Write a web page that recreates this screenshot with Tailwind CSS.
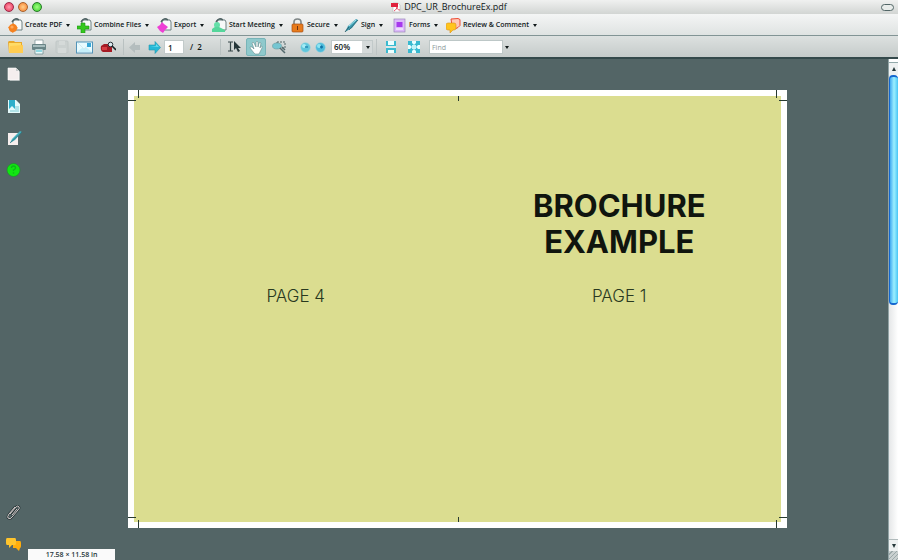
<!DOCTYPE html>
<html lang="en">
<head>
<meta charset="utf-8">
<meta name="viewport" content="width=device-width, initial-scale=1">
<title>DPC_UR_BrochureEx.pdf</title>
<script src="https://cdn.jsdelivr.net/npm/@tailwindcss/browser@4"></script>
</head>
<body class="flex h-screen flex-col overflow-hidden bg-[#536566] font-['Open_Sans','Noto_Sans',sans-serif] text-[#101819]">

<header class="shrink-0">
  <div class="flex h-[14px] items-center bg-linear-to-b from-[#f0f1f0] to-[#d2d5d3] px-1">
    <div class="flex flex-1 gap-1">
      <button aria-label="Close" class="size-[10px] rounded-full border border-[#9c2848] bg-radial from-[#ff9ab0] to-[#e51650]"></button>
      <button aria-label="Minimize" class="size-[10px] rounded-full border border-[#a8622e] bg-radial from-[#ffd08a] to-[#f5791c]"></button>
      <button aria-label="Zoom window" class="size-[10px] rounded-full border border-[#267a26] bg-radial from-[#a0ff80] to-[#20cc20]"></button>
    </div>
    <div class="flex items-center gap-[3px]">
      <svg class="h-[11px] w-[10px]" viewBox="0 0 10 11"><path d="M2 1h5l2 2v7H2z" fill="#fff" stroke="#aaa" stroke-width=".5"/><path d="M0 1h7v4H0z" fill="#e0203c"/><path d="M3 9c2-1 3-3 3-4 0 2 1 3 3 3" fill="none" stroke="#e0203c" stroke-width=".8"/></svg>
      <h1 class="text-[9px] leading-[14px] font-normal">DPC_UR_BrochureEx.pdf</h1>
    </div>
    <div class="flex flex-1 justify-end">
      <button aria-label="Toggle toolbar" class="h-[7px] w-[13px] rounded-full border border-[#526667] bg-[#e8ecea]"></button>
    </div>
  </div>

  <nav aria-label="Tasks" class="flex h-[22px] items-center border-b border-[#829495] bg-linear-to-b from-[#f4f5f5] to-[#dfe3e2] pt-[2px] pl-2 text-[7px] font-semibold whitespace-nowrap">
    <button class="flex w-[69px] items-center gap-[2px]">
      <svg class="size-[15px]" viewBox="0 0 15 15"><path d="M5 2h8l1 2v8H5z" fill="#f7f9f8" stroke="#6f8182"/><path d="M4 4q3-5 7-2" fill="none" stroke="#506364" stroke-width="1.500"/><path d="M5 5l3 3 2 2-3 2-2 3-3-2-2-4 3-1z" fill="#f58220"/><circle cx="5" cy="10" r="4" fill="#f58220"/><circle cx="4" cy="9" r="1.600" fill="#ffab5c"/></svg>
      <span>Create PDF</span><span class="ml-[2px] border-x-2 border-t-3 border-x-transparent border-t-[#101819]"></span>
    </button>
    <button class="flex w-[80px] items-center gap-[2px]">
      <svg class="size-[15px]" viewBox="0 0 15 15"><path d="M5 2h8l1 2v8H5z" fill="#f7f9f8" stroke="#6f8182"/><path d="M4 4q3-5 7-2" fill="none" stroke="#506364" stroke-width="1.500"/><path d="M4 5h4v3h4v3H8v4H4v-4H0V8h4z" fill="#35c81e" stroke="#1d9416" stroke-width=".6"/></svg>
      <span>Combine Files</span><span class="ml-[2px] border-x-2 border-t-3 border-x-transparent border-t-[#101819]"></span>
    </button>
    <button class="flex w-[55px] items-center gap-[2px]">
      <svg class="size-[15px]" viewBox="0 0 15 15"><path d="M5 2h8l1 2v8H5z" fill="#f7f9f8" stroke="#6f8182"/><path d="M4 4q3-5 7-2" fill="none" stroke="#506364" stroke-width="1.500"/><path d="M5 4l2 2 4 3-3 3-2 3-3-2-3-4 3-2z" fill="#ee3fd5"/></svg>
      <span>Export</span><span class="ml-[2px] border-x-2 border-t-3 border-x-transparent border-t-[#101819]"></span>
    </button>
    <button class="flex w-[78px] items-center gap-[2px]">
      <svg class="size-[15px]" viewBox="0 0 15 15"><path d="M5 2h8l1 2v8H5z" fill="#f7f9f8" stroke="#6f8182"/><path d="M4 4q3-5 7-2" fill="none" stroke="#506364" stroke-width="1.500"/><circle cx="5" cy="7" r="3" fill="#63dfa8"/><path d="M0 14v-3q3-3 7-2l6 3v2z" fill="#55d69b"/></svg>
      <span>Start Meeting</span><span class="ml-[2px] border-x-2 border-t-3 border-x-transparent border-t-[#101819]"></span>
    </button>
    <button class="flex w-[54px] items-center gap-[2px]">
      <svg class="size-[15px]" viewBox="0 0 15 15"><path d="M4 8V4q0-3 3.500-3T11 4v4" fill="none" stroke="#7e8586" stroke-width="1.600"/><rect x="2" y="6" width="11" height="8" rx="1" fill="#e87b1c" stroke="#a44e14" stroke-width=".7"/><path d="M7 8h1v4H7z" fill="#6e3312"/></svg>
      <span>Secure</span><span class="ml-[2px] border-x-2 border-t-3 border-x-transparent border-t-[#101819]"></span>
    </button>
    <button class="flex w-[48px] items-center gap-[2px]">
      <svg class="size-[15px]" viewBox="0 0 15 15"><path d="M1 14l3-6 8-7 2 1-6 8z" fill="#3e9db2"/><path d="M1 14l4-5" stroke="#244e59" stroke-width=".8"/><path d="M5 8l7-6" stroke="#a5e4ed"/><path d="M5 12l9-10" stroke="#28616d" stroke-width=".8"/></svg>
      <span>Sign</span><span class="ml-[2px] border-x-2 border-t-3 border-x-transparent border-t-[#101819]"></span>
    </button>
    <button class="flex w-[54px] items-center gap-[2px]">
      <svg class="size-[15px]" viewBox="0 0 15 15"><rect x="2" y="1" width="11" height="13" fill="#dcb8fa" stroke="#9a86b8" stroke-width=".7"/><rect x="4.500" y="4" width="6" height="5" fill="#a638ed"/><path d="M4 11h7" stroke="#fff"/></svg>
      <span>Forms</span><span class="ml-[2px] border-x-2 border-t-3 border-x-transparent border-t-[#101819]"></span>
    </button>
    <button class="flex items-center gap-[2px]">
      <svg class="size-[15px]" viewBox="0 0 15 15"><path d="M5 1l7-.5 2 1v6l-2 2-2 1-4-3z" fill="#ffc8b4" stroke="#ed4b35"/><path d="M2 5h6q2 0 2 2v3q0 2-2 2H7l-3 3v-3H2q-2 0-2-2V7q0-2 2-2z" fill="#ffc51d" stroke="#dc9015" stroke-width=".6"/></svg>
      <span>Review &amp; Comment</span><span class="ml-[2px] border-x-2 border-t-3 border-x-transparent border-t-[#101819]"></span>
    </button>
  </nav>

  <div role="toolbar" aria-label="File and view" class="flex h-[23px] items-center border-b-2 border-[#34494b] bg-linear-to-b from-[#dde1e0] to-[#c5cbca] pt-px pl-1 text-[8px] font-semibold">
    <button aria-label="Open" class="flex w-[23px] justify-center"><svg class="size-4" viewBox="0 0 16 16"><path d="M0 3l1-1h5l1 1h7v4l1 7H1z" fill="#e8a82b"/><path d="M1 4h12v9H1z" fill="#ffdc67"/><path d="M1 14l1-7 13-1v8z" fill="#ffcd52"/></svg></button>
    <button aria-label="Print" class="flex w-[23px] justify-center"><svg class="size-4" viewBox="0 0 16 16"><path d="M4 1h8v6H4z" fill="#fff" stroke="#789092" stroke-width=".7"/><rect x="1" y="5" width="14" height="6" rx="1" fill="#6a8587"/><path d="M2 6h12v2H2z" fill="#a7bdbe"/><path d="M4 10h8v5H4z" fill="#e8fafa" stroke="#678789" stroke-width=".7"/><path d="M5 12h6" stroke="#35b5c8"/></svg></button>
    <button aria-label="Save" disabled class="flex w-[23px] justify-center"><svg class="size-4" viewBox="0 0 16 16"><rect x="2" y="2" width="12" height="12" rx="1" fill="#cbd1d0" stroke="#c0c7c6"/><path d="M5 2h6v4H5zM4 9h8v5H4z" fill="#d5dad9"/></svg></button>
    <button aria-label="Email" class="flex w-[23px] justify-center"><svg class="size-[17px]" viewBox="0 0 17 17"><rect x=".5" y="3" width="16" height="11" fill="#e9fbff" stroke="#5293b8"/><path d="M1 13l5-4h5l5 4" fill="#c5effa"/><path d="M2 4l6 6 7-6" fill="none" stroke="#d3eaf0"/><path d="M11 4h4v4h-4z" fill="#37a6d6"/></svg></button>
    <button aria-label="Search" class="flex w-[23px] justify-center"><svg class="size-4" viewBox="0 0 16 16"><path d="M1 7l3-2h6l2 3v5H3q-3-1-2-6z" fill="#a51b24"/><path d="M2 8h5v3H2z" fill="#d83c43"/><circle cx="10.500" cy="5.500" r="2.300" fill="#dceaf0" stroke="#273137"/><path d="M12 7l4 4" stroke="#172125" stroke-width="1.600"/></svg></button>
    <span class="ml-1 h-4 w-px bg-[#b9c1c1]"></span>
    <button aria-label="Previous page" disabled class="flex w-5 justify-center"><svg class="size-[13px]" viewBox="0 0 13 13"><path d="M1 6.500L7 1v3h5v5H7v3z" fill="#b4bdbe"/></svg></button>
    <button aria-label="Next page" class="flex w-5 justify-center"><svg class="size-[13px]" viewBox="0 0 13 13"><path d="M12.500 6.500L7 .5V4H1v5h6v3.500z" fill="#24b8d6" stroke="#2198ae" stroke-width=".6"/><path d="M2 5h6V3l3 3z" fill="#6fe0ef"/></svg></button>
    <input aria-label="Page number" value="1" class="h-[14px] w-5 border border-[#c2caca] bg-white pl-[3px]">
    <span class="ml-[6px] w-[30px] whitespace-pre">/  2</span>
    <span class="h-4 w-px bg-[#b9c1c1]"></span>
    <button aria-label="Select text" class="ml-[3px] flex w-5 justify-center"><svg class="h-[14px] w-[13px]" viewBox="0 0 13 14"><path d="M0 2h5M2.500 2v9M0 11h5" stroke="#38484a" stroke-width="1.200"/><path d="M6 1v9l2-2 2 4 2-1-2-3h3z" fill="#26373a"/></svg></button>
    <button aria-label="Hand tool" aria-pressed="true" class="ml-[2px] flex h-[18px] w-5 items-center justify-center rounded-xs border border-[#78b4b8] bg-[#8fc9cc]"><svg class="size-[15px]" viewBox="0 0 15 15"><path d="M5 13L1 8q0-2 2-1l2 2-2-6q1-2 2 0l2 4V2q1-2 2 0v5l1-4q1-1 2 0l-1 5 1-2q2 0 1 2l-2 4-1 2H6z" fill="#fff" stroke="#63898c" stroke-width=".6"/></svg></button>
    <button aria-label="Marquee zoom" class="ml-[3px] flex w-5 justify-center"><svg class="size-[15px]" viewBox="0 0 15 15"><path d="M5 2h8v6H5z" fill="none" stroke="#526668" stroke-dasharray="2 1"/><ellipse cx="5" cy="6" rx="4.500" ry="3" fill="#75c6d2" stroke="#659a9f" stroke-width=".6"/><path d="M8 8l5 5M10 7l3 3" stroke="#53696d" stroke-width="1.500"/></svg></button>
    <button aria-label="Zoom out" class="ml-2 flex w-[16px] justify-center"><svg class="size-[11px]" viewBox="0 0 11 11"><circle cx="5.500" cy="5.500" r="4.800" fill="#5fc6dc" stroke="#9fd6df" stroke-width=".6"/><circle cx="4" cy="4" r="2" fill="#a4edf4"/><path d="M5 5h3" stroke="#2488b4" stroke-width="1.500"/></svg></button>
    <button aria-label="Zoom in" class="flex w-[15px] justify-center"><svg class="size-[11px]" viewBox="0 0 11 11"><circle cx="5.500" cy="5.500" r="4.800" fill="#4dbbdb" stroke="#9fd6df" stroke-width=".6"/><circle cx="4" cy="4" r="2" fill="#8ee5f2"/><path d="M5 5h3M6.500 3.500v3" stroke="#1273a6" stroke-width="1.400"/></svg></button>
    <div class="relative ml-[3px] flex items-center">
      <select aria-label="Zoom level" class="h-[14px] w-[42px] appearance-none border border-[#c2caca] bg-linear-to-r from-white from-75% to-[#d5dada] to-75% pl-[2px]"><option>60%</option><option>100%</option></select>
      <span class="pointer-events-none absolute right-[3px] border-x-2 border-t-3 border-x-transparent border-t-[#101819]"></span>
    </div>
    <span class="ml-[3px] h-4 w-px bg-[#bdc4c4]"></span>
    <button aria-label="Fit width" class="ml-[2px] flex w-[23px] justify-center"><svg class="size-[14px]" viewBox="0 0 14 14"><path d="M2 1h10v5H2zM2 8h10v5H2z" fill="#3bbad0"/><path d="M4 1h6v4H4zM4 10h6v3H4z" fill="#edffff"/><path d="M2 7h10" stroke="#e8ffff"/></svg></button>
    <button aria-label="Fit page" class="flex w-[23px] justify-center"><svg class="size-[14px]" viewBox="0 0 14 14"><path d="M1 1h12v12H1z" fill="#38b9d0"/><path d="M5 1h4v2L7 5 5 3zM5 13h4v-2L7 9l-2 2zM1 5v4h2l2-2-2-2zM13 5v4h-2L9 7l2-2z" fill="#e8ffff"/><path d="M5 5h4v4H5z" fill="#c3f3f8"/></svg></button>
    <input aria-label="Find" placeholder="Find" class="ml-[4px] h-[14px] w-[74px] border border-[#bdc7c7] bg-white pl-[2px] text-[7px] font-normal placeholder:text-[#8d9b9c]">
    <button aria-label="Find options" class="ml-[2px] border-x-2 border-t-3 border-x-transparent border-t-[#101819]"></button>
  </div>
</header>

<main class="flex min-h-0 flex-1">
  <aside class="flex w-7 shrink-0 flex-col items-center justify-between pt-[7px] pb-2">
    <div class="flex flex-col gap-4">
      <button aria-label="Pages"><svg class="size-4" viewBox="0 0 16 16"><path d="M4 3h7l3 3v9H4z" fill="#98a2a2"/><path d="M2 2h8l3 3v9H2z" fill="#f4eeee" stroke="#fff" stroke-width=".6"/><path d="M10 2v3h3" fill="#c5caca"/></svg></button>
      <button aria-label="Bookmarks"><svg class="size-4" viewBox="0 0 16 16"><path d="M2 2h8l4 4v9H2z" fill="#e5fafb"/><path d="M3 2h6v9L6 8l-3 3z" fill="#2fafca"/><path d="M9 9h4M9 11h4M4 13h9" stroke="#7dcbd5"/></svg></button>
      <button aria-label="Signatures"><svg class="size-4" viewBox="0 0 16 16"><path d="M2 3h10v12H2z" fill="#f7efee"/><path d="M4 13l2-4 8-8 2 1-7 8z" fill="#45b0bd"/><path d="M4 13l12-11" stroke="#235f6b" stroke-width=".6"/></svg></button>
      <button aria-label="How to"><svg class="size-4" viewBox="0 0 16 16"><circle cx="7.500" cy="8" r="6.500" fill="#12e512" stroke="#168f26" stroke-width=".6"/><path d="M5.500 6q0-2 2-2t2 2q0 1-2 2v1" fill="none" stroke="#0cb919" stroke-width="1.300"/><circle cx="7.500" cy="11" r=".8" fill="#0cb919"/></svg></button>
    </div>
    <div class="flex flex-col gap-4">
      <button aria-label="Attachments"><svg class="size-4" viewBox="0 0 16 16"><path d="M4 10l6-7q2-2 3 0 1 1-1 3l-6 7q-2 3-4 1-1-1 1-4l6-7M6 11l5-6" fill="none" stroke="#273436" stroke-width="2.200"/><path d="M4 10l6-7q2-2 3 0 1 1-1 3l-6 7q-2 3-4 1-1-1 1-4l6-7M6 11l5-6" fill="none" stroke="#d6cfce"/></svg></button>
      <button aria-label="Comments"><svg class="size-4" viewBox="0 0 16 16"><path d="M7 5h7q1 0 1 2v3q0 2-1 2l-1 3-3-3H7z" fill="#ffad0c"/><path d="M1 2h8q1 0 1 2v3q0 2-1 2H6l-3 3V9H1Q0 9 0 7V4q0-2 1-2z" fill="#ffc42c"/></svg></button>
    </div>
  </aside>

  <div class="flex min-w-0 flex-1 flex-col justify-between">
    <article class="relative mt-[31px] mr-[101px] ml-[100px] flex h-[438px] flex-col bg-white p-[6px]">
      <div class="grid flex-1 grid-cols-2 bg-[#dbdd90] text-center font-['Inter',sans-serif]">
        <section class="flex flex-col items-center pt-[188px]">
          <p class="text-[17px] leading-6 font-light text-[#29391f]">PAGE 4</p>
        </section>
        <section class="flex flex-col items-center pt-[92px]">
          <h2 class="text-[31px] leading-9 font-bold text-[#10150e]">BROCHURE<br>EXAMPLE</h2>
          <p class="mt-6 text-[17px] leading-6 font-light text-[#29391f]">PAGE 1</p>
        </section>
      </div>
      <!-- Crop and fold marks -->
      <i class="absolute top-0 left-[10px] h-2 w-px bg-[#283a30]"></i>
      <i class="absolute top-[10px] left-0 h-px w-2 bg-[#283a30]"></i>
      <i class="absolute top-0 right-[10px] h-2 w-px bg-[#283a30]"></i>
      <i class="absolute top-[10px] right-0 h-px w-2 bg-[#283a30]"></i>
      <i class="absolute bottom-0 left-[10px] h-2 w-px bg-[#283a30]"></i>
      <i class="absolute bottom-[10px] left-0 h-px w-2 bg-[#283a30]"></i>
      <i class="absolute right-[10px] bottom-0 h-2 w-px bg-[#283a30]"></i>
      <i class="absolute right-0 bottom-[10px] h-px w-2 bg-[#283a30]"></i>
      <i class="absolute top-[6px] left-1/2 h-[5px] w-px bg-[#283a30]"></i>
      <i class="absolute bottom-[6px] left-1/2 h-[5px] w-px bg-[#283a30]"></i>
    </article>
    <p class="h-[11px] w-[87px] bg-[#fafafa] text-center text-[7px] leading-[11px] font-semibold text-[#26363a]">17.58 × 11.58 in</p>
  </div>

  <div aria-label="Vertical scroll bar" class="flex w-[10px] shrink-0 flex-col border-l border-[#91a3a5] bg-linear-to-r from-[#e5e7e8] to-white">
    <div class="h-1 border-b border-[#92a9aa] bg-white"></div>
    <button aria-label="Scroll up" class="flex h-3 items-center justify-center bg-[#eef1f1]"><span class="border-x-2 border-b-4 border-x-transparent border-b-[#26383a]"></span></button>
    <div class="h-[230px] rounded-sm border-y-2 border-l border-[#1467cf] bg-linear-to-r from-[#40a8f0] via-[#9bf0ff] to-[#45c5f5]"></div>
    <div class="flex-1"></div>
    <button aria-label="Scroll down" class="flex h-3 items-center justify-center border-t border-[#b1bbbc] bg-[#eef1f1]"><span class="border-x-2 border-t-4 border-x-transparent border-t-[#26383a]"></span></button>
    <div class="h-[9px] bg-[repeating-linear-gradient(135deg,#c9d0d0_0_2px,#9ca9aa_2px_3px)]"></div>
  </div>
</main>
</body>
</html>
